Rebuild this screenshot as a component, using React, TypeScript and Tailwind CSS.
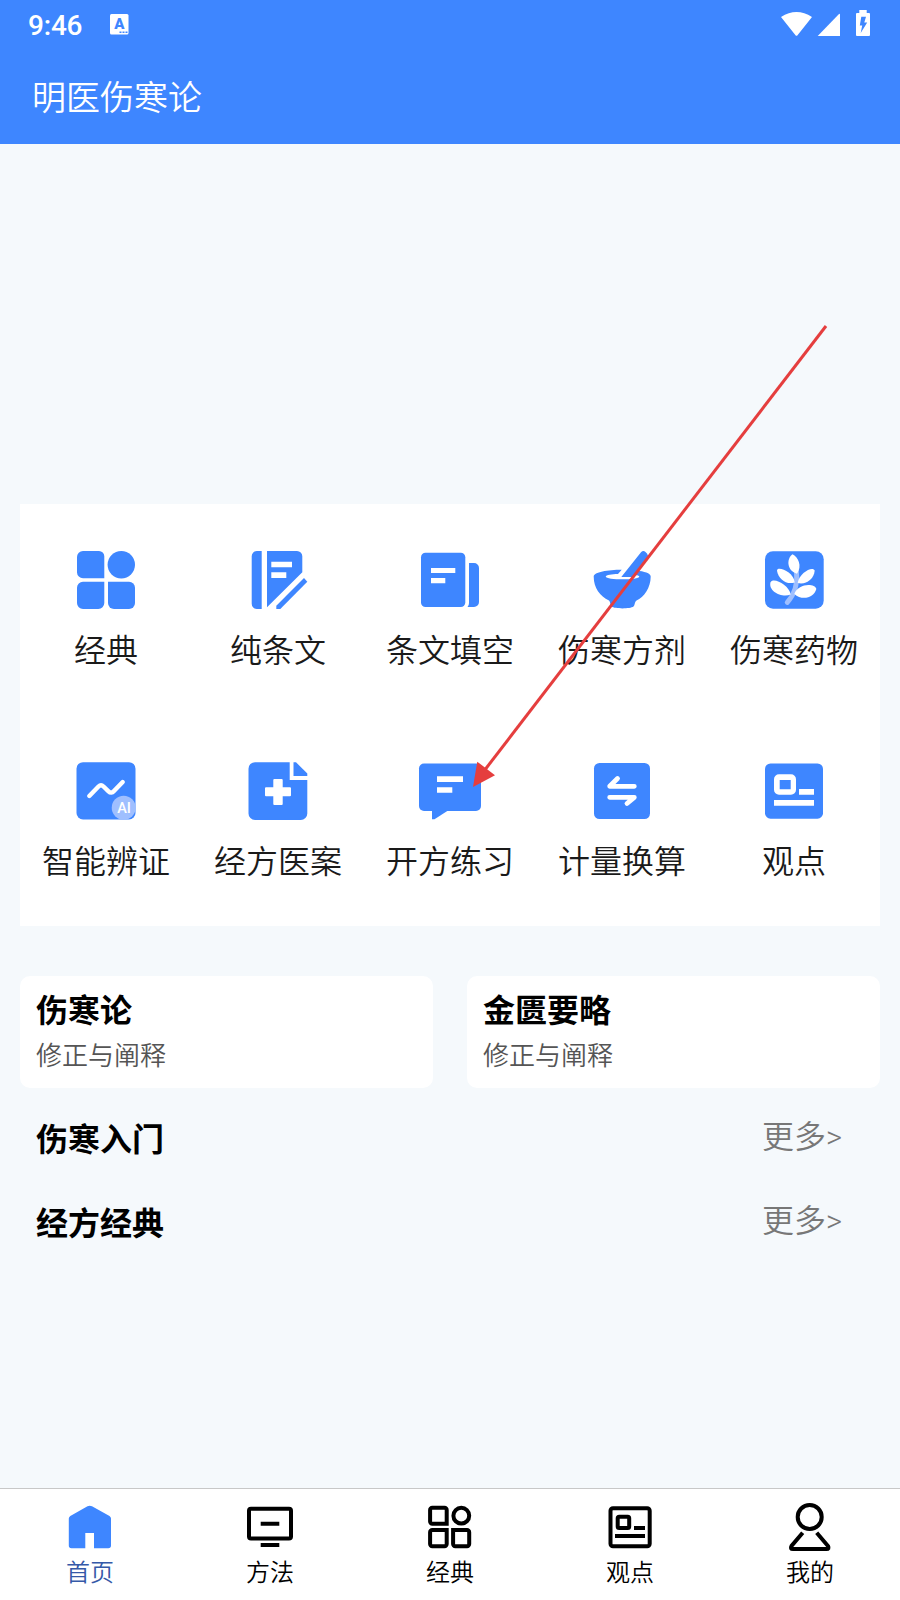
import { useState } from 'react';
import type { ReactNode } from 'react';

const BLUE = '#3e86ff';

const menu: { label: string; icon: ReactNode }[] = [
  {
    label: '经典',
    icon: (
      <g fill={BLUE}>
        <path d="M9 3H25a5.3 5.3 0 0 1 5.3 5.3V30.3H9A6 6 0 0 1 3 24.5V9A6 6 0 0 1 9 3Z" />
        <circle cx="47.3" cy="16.7" r="13.7" />
        <path d="M9 33.7H30.3V55a6 6 0 0 1-6 6H9a6 6 0 0 1-6-6V39.7a6 6 0 0 1 6-6Z" />
        <path d="M34 33.7H55a6 6 0 0 1 6 6V55a6 6 0 0 1-6 6H40a6 6 0 0 1-6-6Z" />
      </g>
    ),
  },
  {
    label: '纯条文',
    icon: (
      <>
        <path fill={BLUE} d="M15.7 3V61H11a5.3 5.3 0 0 1-5.3-5.3V8.3A5.3 5.3 0 0 1 11 3Z" />
        <path fill={BLUE} d="M21 3H51a5.3 5.3 0 0 1 5.3 5.3V24.3L21 59.3Z" />
        <path fill={BLUE} d="M58 30L61.3 33.7L34.3 61H30.3V57.7Z" />
        <path fill="#fff" d="M25.3 13.7H46V19.3H25.3ZM25.3 24.3H40.3V30H25.3Z" />
      </>
    ),
  },
  {
    label: '条文填空',
    icon: (
      <>
        <rect x="3" y="4.7" width="44.3" height="54.3" rx="4.5" fill={BLUE} />
        <path fill={BLUE} d="M51 15H56a5 5 0 0 1 5 5V54a5 5 0 0 1-5 5H49.5Q51 57.5 51 55Z" />
        <path fill="#fff" d="M13 20H37.3V25H13ZM13 30H27.3V35.3H13Z" />
      </>
    ),
  },
  {
    label: '伤寒方剂',
    icon: (
      <>
        <path fill={BLUE} d="M3.7 28.5C3.7 24 18 21.7 31.7 21.7L28 26C22 26.2 16 27 15.7 28.5C16 30.5 24 31.3 32.5 31.3C41 31.3 49.3 30.5 49.3 28.5C49.3 27.5 46 27 43 26.7L46.5 22.5C54 23.5 60.7 25 60.7 28.5C60.7 40 54 49 46.5 52.5C44.5 54 45 57 43.5 58.5C40 61 25 61 21.5 58.5C20 57 20.5 54 19 52.5C10 48 3.7 40 3.7 28.5Z" />
        <path fill={BLUE} d="M51 4.2Q53.3 2 55.5 4L57 5.5Q58.8 7.5 57 9.5L42 29H31.3Z" />
      </>
    ),
  },
  {
    label: '伤寒药物',
    icon: (
      <>
        <rect x="3" y="3.2" width="58.7" height="57.5" rx="8" fill={BLUE} />
        <path d="M34.5 24C35.5 35 34 45 25.2 54.5" fill="none" stroke="#9fbfff" strokeWidth="4.8" strokeLinecap="round" />
        <g fill="#fff">
          <path d="M30.5 6.3C36 9 40.5 18 35 25.700C25 23 24 11 30.500 6.300Z" />
          <path d="M15 22.700C15 17.500 32 24 32.700 34.500C24 37 16.500 31 15 22.700Z" />
          <path d="M52.700 22.700C52 31 44 37 35.700 35C37 25 51 17.500 52.700 22.700Z" />
          <path d="M8.500 34.500C11 28.500 27 37 28.700 46.500C20 50.500 6 43 8.500 34.500Z" />
          <path d="M54.300 41C52 50 40 53 32.300 46C36 35 53 35 54.300 41Z" />
        </g>
      </>
    ),
  },
  {
    label: '智能辨证',
    icon: (
      <>
        <rect x="2.5" y="3.2" width="59" height="57.3" rx="6.5" fill={BLUE} />
        <path d="M15.3 37L24.5 27.5Q27 25 29.5 27.5L34.5 32.3Q37.3 35 40 32L48.7 23" fill="none" stroke="#fff" strokeWidth="4.4" strokeLinecap="round" />
        <circle cx="49.7" cy="48.7" r="12" fill="#9fbfff" />
        <text x="50" y="53.6" textAnchor="middle" fill="#fff" fontSize="14.5" fontWeight="500" fontFamily="Roboto, sans-serif">AI</text>
      </>
    ),
  },
  {
    label: '经方医案',
    icon: (
      <>
        <path fill={BLUE} d="M9 3.2H43.7V21H61.3V54.5a6.5 6.5 0 0 1-6.5 6.5H9a6.5 6.5 0 0 1-6.5-6.5V9.7A6.5 6.5 0 0 1 9 3.2Z" />
        <path fill={BLUE} d="M47.5 3.2H50L61.3 14.5V17H47.5Z" />
        <path fill="#fff" d="M28.3 20H35.7a1 1 0 0 1 1 1V28.3H44a1 1 0 0 1 1 1V36.3a1 1 0 0 1-1 1H36.7V45a1 1 0 0 1-1 1H28.3a1 1 0 0 1-1-1V37.3H20a1 1 0 0 1-1-1V29.3a1 1 0 0 1 1-1H27.3V21a1 1 0 0 1 1-1Z" />
      </>
    ),
  },
  {
    label: '开方练习',
    icon: (
      <>
        <rect x="1" y="4.5" width="62" height="47.5" rx="5" fill={BLUE} />
        <path fill={BLUE} d="M14 51V60.3H16.5L29.3 52V51Z" />
        <path fill="#fff" d="M19 17.3H45V23H19ZM19 28.3H34.3V33.7H19Z" />
      </>
    ),
  },
  {
    label: '计量换算',
    icon: (
      <>
        <rect x="4" y="4" width="56" height="56" rx="5.5" fill={BLUE} />
        <path d="M44.3 27.3H19.7L27.5 19.5M19.7 38.3H44.3L37 44.5" fill="none" stroke="#fff" strokeWidth="4.8" strokeLinecap="round" strokeLinejoin="round" />
      </>
    ),
  },
  {
    label: '观点',
    icon: (
      <>
        <rect x="3" y="4.5" width="58" height="55.2" rx="5.5" fill={BLUE} />
        <path fill="#fff" fillRule="evenodd" d="M17 15.3H29a5 5 0 0 1 5 5V30.7a5 5 0 0 1-5 5H17a5 5 0 0 1-5-5V20.3a5 5 0 0 1 5-5ZM17.7 21V30.3H28.7V21Z" />
        <path fill="#fff" d="M37 30H52V35.7H37ZM12 41H52V46.7H12Z" />
      </>
    ),
  },
];

const books = [
  { title: '伤寒论', sub: '修正与阐释' },
  { title: '金匮要略', sub: '修正与阐释' },
];

const sections = ['伤寒入门', '经方经典'];

const tabs: { label: string; icon: ReactNode }[] = [
  {
    label: '首页',
    icon: <path fill={BLUE} d="M21.5 3.3Q23.7 2 26 3.3L43.5 13Q45 14 45 15.5V42.5a2.700 2.700 0 0 1-2.700 2.700H28V30H19.300V45.200H5.500a2.700 2.700 0 0 1-2.700-2.700V15.500Q2.800 14 4.300 13Z" />,
  },
  {
    label: '方法',
    icon: (
      <>
        <rect x="3" y="5.7" width="42" height="29.7" rx="2" fill="none" stroke="#000" strokeWidth="4" />
        <path d="M14.7 18.7H33.3V22.7H14.7ZM14.7 40H33.3V44H14.7Z" />
      </>
    ),
  },
  {
    label: '经典',
    icon: (
      <g fill="none" stroke="#000" strokeWidth="4">
        <path d="M6.3 4.7H18.5a2.2 2.2 0 0 1 2.2 2.2V20.7H6.3a2.2 2.2 0 0 1-2.2-2.2V6.9a2.2 2.2 0 0 1 2.2-2.2Z" />
        <circle cx="35.3" cy="12.7" r="7.9" />
        <path d="M6.3 27.1H20.7V41a2.2 2.2 0 0 1-2.2 2.2H6.3A2.2 2.2 0 0 1 4.1 41V29.3a2.2 2.2 0 0 1 2.2-2.2Z" />
        <path d="M27.1 27.1H41a2.2 2.2 0 0 1 2.2 2.2V41a2.2 2.2 0 0 1-2.2 2.2H29.3A2.2 2.2 0 0 1 27.1 41Z" />
      </g>
    ),
  },
  {
    label: '观点',
    icon: (
      <>
        <rect x="4.5" y="5.2" width="39.2" height="38" rx="2.5" fill="none" stroke="#000" strokeWidth="4" />
        <rect x="11.7" y="13.7" width="11.5" height="11.3" rx="1.5" fill="none" stroke="#000" strokeWidth="4" />
        <path d="M28 23H39V27H28ZM9 31H39V35H9Z" />
      </>
    ),
  },
  {
    label: '我的',
    icon: (
      <g fill="none" stroke="#000" strokeWidth="4">
        <circle cx="23.7" cy="14" r="12" />
        <path d="M16.7 29.7L5.5 43Q3.8 46 7 46H40.5Q43.5 46 42 43L30.7 29.7" />
      </g>
    ),
  },
];

function StatusBar() {
  return (
    <div className="flex h-12 items-center justify-between pl-7 pr-[30px] text-white">
      <div className="flex items-center">
        <span className="w-[82px] pt-[3px] text-[28px] leading-[48px] font-medium tracking-[-0.2px] font-[Roboto,sans-serif]">9:46</span>
        <svg width="19" height="21" viewBox="0 0 19 21">
          <rect width="18.5" height="20.5" rx="1.5" fill="#fff" />
          <text x="9.3" y="15.3" textAnchor="middle" fontSize="15" fontWeight="900" fontFamily="Roboto, sans-serif" fill={BLUE}>A</text>
          <path d="M9.5 17.5h2v1.5h-2zM12.5 17.5h2v1.5h-2zM15.5 17.5h2v1.5h-2z" fill={BLUE} />
        </svg>
      </div>
      <svg width="90" height="28" viewBox="0 0 90 28" fill="#fff">
        <path d="M1 7Q16.5 -3.2 32 7L17.5 25.2Q16.5 26.5 15.5 25.2Z" />
        <path d="M37.7 26L59 4Q60 3.3 60 4.5V26Z" />
        <path fillRule="evenodd" d="M79.3 0H86.7V3H89a1 1 0 0 1 1 1V25a1 1 0 0 1-1 1H77a1 1 0 0 1-1-1V4a1 1 0 0 1 1-1H79.3ZM81.3 6.7L79.8 15.5H82.2L80.7 23L87.2 12.5H84.3L86 6.7Z" />
      </svg>
    </div>
  );
}

export default function App() {
  const [active, setActive] = useState(0);

  return (
    <div className="relative flex h-[1600px] w-[900px] flex-col overflow-hidden bg-[#f5f9fc] font-['Noto_Sans_CJK_SC',sans-serif] font-[350]">
      <header className="h-36 shrink-0 bg-[#3e86ff]">
        <StatusBar />
        <h1 className="flex h-24 items-center pb-px pl-8 text-[34px] leading-none text-white">明医伤寒论</h1>
      </header>

      <main className="flex-1 px-5 pt-[360px]">
        <div className="grid grid-cols-5 bg-white">
          {menu.map((m) => (
            <button key={m.label} className="flex h-[211px] flex-col items-center pt-11">
              <svg width="64" height="64" viewBox="0 0 64 64">{m.icon}</svg>
              <span className="mt-3 text-[32px] leading-[48px] whitespace-nowrap text-[#1a1a1a]">{m.label}</span>
            </button>
          ))}
        </div>

        <div className="mt-[50px] grid grid-cols-2 gap-[34px]">
          {books.map((b) => (
            <div key={b.title} className="h-28 rounded-[10px] bg-white px-4 pt-2">
              <h2 className="text-[32px] leading-[48px] font-bold text-black">{b.title}</h2>
              <p className="mt-0.5 text-[26px] leading-10 text-[#555]">{b.sub}</p>
            </div>
          ))}
        </div>

        <div className="mt-[7px]">
          {sections.map((s) => (
            <div key={s} className="flex h-[84px] items-center justify-between pr-[38px] pl-4">
              <h2 className="text-[32px] leading-[48px] font-bold text-black">{s}</h2>
              <a className="mb-[3px] text-[32px] leading-[48px] text-[#777]">
                更多<span className="font-[Roboto,sans-serif] text-[31px] font-light">&gt;</span>
              </a>
            </div>
          ))}
        </div>
      </main>

      <nav className="grid h-28 shrink-0 grid-cols-5 border-t border-[#c8c8c8] bg-white">
        {tabs.map((t, i) => (
          <button key={t.label} onClick={() => setActive(i)} className="flex flex-col items-center pt-3.5">
            <svg width="48" height="48" viewBox="0 0 48 48">{t.icon}</svg>
            <span className={`mt-0.5 text-[24px] leading-9 ${active === i ? 'text-[#3559a8]' : 'text-black'}`}>{t.label}</span>
          </button>
        ))}
      </nav>

      {/* pointer to the practice entry */}
      <svg className="pointer-events-none absolute inset-0" width="900" height="1600" viewBox="0 0 900 1600">
        <path d="M826 326L484 771" stroke="#e53e3e" strokeWidth="3" />
        <path d="M473 787L477.3 761.7L495 775.3Z" fill="#e53e3e" />
      </svg>
    </div>
  );
}
